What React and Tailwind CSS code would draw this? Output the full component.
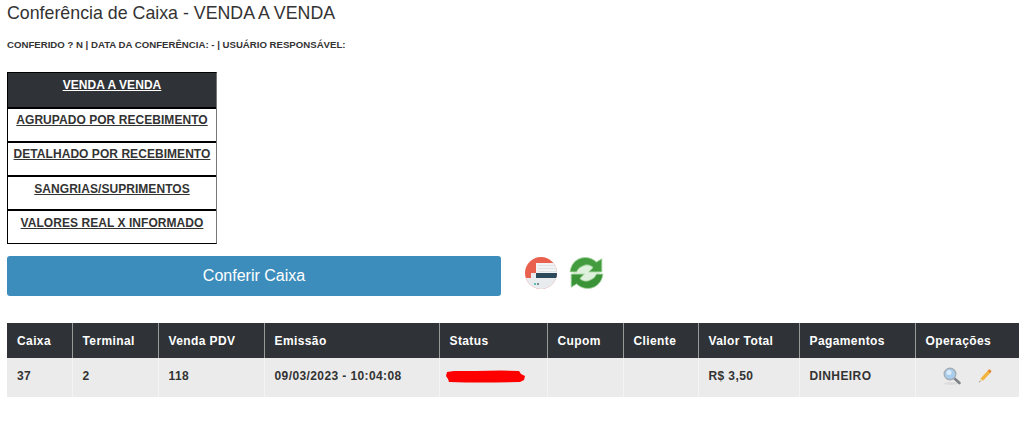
import React from "react";

const font = { fontFamily: '"Liberation Sans", Arial, sans-serif' };

const tabs = [
  "VENDA A VENDA",
  "AGRUPADO POR RECEBIMENTO",
  "DETALHADO POR RECEBIMENTO",
  "SANGRIAS/SUPRIMENTOS",
  "VALORES REAL X INFORMADO",
];

const tabStyles = [
  "pt-[3px] bg-[#2f3337] text-white",
  "pt-[2px] bg-white text-[#333333] border-t-2 border-black",
  "pt-[2px] bg-white text-[#333333] border-t-2 border-black",
  "pt-[3px] bg-white text-[#333333] border-t-2 border-black",
  "pt-[3px] bg-white text-[#333333] border-t-2 border-black",
];

const cols = [
  ["Caixa", "37", 65],
  ["Terminal", "2", 86],
  ["Venda PDV", "118", 106],
  ["Emissão", "09/03/2023 - 10:04:08", 175],
  ["Status", "", 108],
  ["Cupom", "", 76],
  ["Cliente", "", 75],
  ["Valor Total", "R$ 3,50", 101],
  ["Pagamentos", "DINHEIRO", 116],
  ["Operações", "", 104],
];

function PrinterIcon() {
  return (
    <svg width="34" height="34" viewBox="0 0 34 34">
      <defs>
        <clipPath id="pc"><circle cx="17" cy="17" r="16" /></clipPath>
      </defs>
      <circle cx="17" cy="17" r="16" fill="#e9604f" />
      <g clipPath="url(#pc)">
        <rect x="12" y="7" width="22" height="10" fill="#f1f3f4" />
        <rect x="14" y="9" width="20" height="1" fill="#dfe3e5" />
        <rect x="14" y="12" width="20" height="1" fill="#dfe3e5" />
        <rect x="14" y="15" width="20" height="1" fill="#dfe3e5" />
        <rect x="12" y="17" width="22" height="5" fill="#2c4a5c" />
        <path d="M7 17h5v5h22v12H0V22h7z" fill="#e8ecee" />
        <rect x="10" y="27" width="2" height="2" fill="#5cc0b0" />
        <rect x="13" y="27" width="2" height="2" fill="#7a8a94" />
      </g>
    </svg>
  );
}

function RefreshIcon() {
  return (
    <svg width="35" height="34" viewBox="1.5 1.5 31 31">
      <circle cx="17" cy="17" r="12" fill="#dff0dc" />
      <path d="M2 16C3 7 10 2 18 3c3 .4 6 2 8 4l5-3v12H19l4-4c-3-3-7-3-10-1-3 1-4 3-5 5z" fill="#439c3d" stroke="#a5d6a1" strokeWidth="0.8" />
      <path d="M32 18c-1 9-8 14-16 13-3-.4-6-2-8-4l-5 3V18h12l-4 4c3 3 7 3 10 1 3-1 4-3 5-5z" fill="#3b9337" stroke="#a5d6a1" strokeWidth="0.8" />
    </svg>
  );
}

function SearchIcon() {
  return (
    <svg width="20" height="20" viewBox="0 0 20 20">
      <ellipse cx="9" cy="17.5" rx="7" ry="1.5" fill="#dcdcdc" />
      <path d="M12.5 12.5l5 4.5" stroke="#7d8287" strokeWidth="2.6" strokeLinecap="round" />
      <circle cx="8" cy="8" r="5.8" fill="#a9cdec" stroke="#a4adb5" strokeWidth="1.4" />
      <circle cx="7" cy="6.5" r="2.5" fill="#d9ebf8" />
    </svg>
  );
}

function PencilIcon() {
  return (
    <svg width="16" height="16" viewBox="0 0 16 16">
      <path d="M4.5 10.5l7-7.5 2.5 2.3-7 7.5z" fill="#f2b43c" />
      <path d="M11.5 3l1-1.2c.5-.5 1.2-.5 1.7 0l.8.8c.5.5.4 1.2 0 1.6l-1 1.1z" fill="#e6862e" />
      <path d="M4.5 10.5L3 14.5l3.9-2z" fill="#e8d9b5" />
      <path d="M3.6 13l-.6 1.5 1.5-.7z" fill="#777" />
    </svg>
  );
}

function Scribble() {
  return (
    <svg width="80" height="13" viewBox="0 0 80 13" className="-ml-[4px] block">
      <path
        d="M1 2 L8 1 L30 1 L55 0.5 L73 1 L75 4 L79 6 L78 10 L74 12 L50 12.5 L20 12.5 L3 12 L2 9 L0 6z"
        fill="#ff0000"
      />
    </svg>
  );
}

export default function App() {
  return (
    <div className="bg-white min-h-[437px] w-[1024px] overflow-hidden pl-[7px] pr-[5px] pt-[2px] text-[#333333]" style={font}>
      <h1 className="text-[17.8px] leading-[22px] font-normal text-[#333333] m-0">
        Conferência de Caixa - VENDA A VENDA
      </h1>
      <p className="mt-[14px] text-[9.65px] leading-[14px] font-bold text-[#333333]">
        CONFERIDO ? N | DATA DA CONFERÊNCIA: - | USUÁRIO RESPONSÁVEL:
      </p>

      <div className="mt-[20px] w-[210px] flex flex-col border border-black border-r-[#777777]">
        {tabs.map((t, i) => (
          <div
            key={t}
            className={`h-[34px] text-center text-[12px] tracking-[0.05px] leading-[18px] font-bold underline ${tabStyles[i]}`}
          >
            {t}
          </div>
        ))}
      </div>

      <div className="mt-[12px] flex items-start">
        <button className="w-[494px] h-[40px] rounded-[3px] bg-[#3c8dbc] text-white text-[16px] font-normal">
          Conferir Caixa
        </button>
        <div className="ml-[23px] flex gap-[11px]">
          <PrinterIcon />
          <RefreshIcon />
        </div>
      </div>

      <table className="mt-[27px] w-[1012px] table-fixed border-collapse text-[12px] tracking-[0.4px] font-bold">
        <thead>
          <tr className="h-[35px] bg-[#2f3337] text-white">
            {cols.map(([h, , w], i) => (
              <th
                key={h}
                style={{ width: w }}
                className={`px-[10px] text-left font-bold ${i ? "border-l border-[#9a9a9a]" : ""}`}
              >
                {h}
              </th>
            ))}
          </tr>
        </thead>
        <tbody>
          <tr className="h-[39px] bg-[#ebebeb] text-[#333333]">
            {cols.map(([h, v], i) => (
              <td key={h} className={`px-[10px] pb-[3px] ${i ? "border-l border-[#f4f4f4]" : ""}`}>
                {h === "Status" && <Scribble />}
                {h === "Operações" ? (
                  <div className="flex items-center gap-[14px] pl-[16px] h-[20px]">
                    <SearchIcon />
                    <PencilIcon />
                  </div>
                ) : (
                  v
                )}
              </td>
            ))}
          </tr>
        </tbody>
      </table>
    </div>
  );
}
